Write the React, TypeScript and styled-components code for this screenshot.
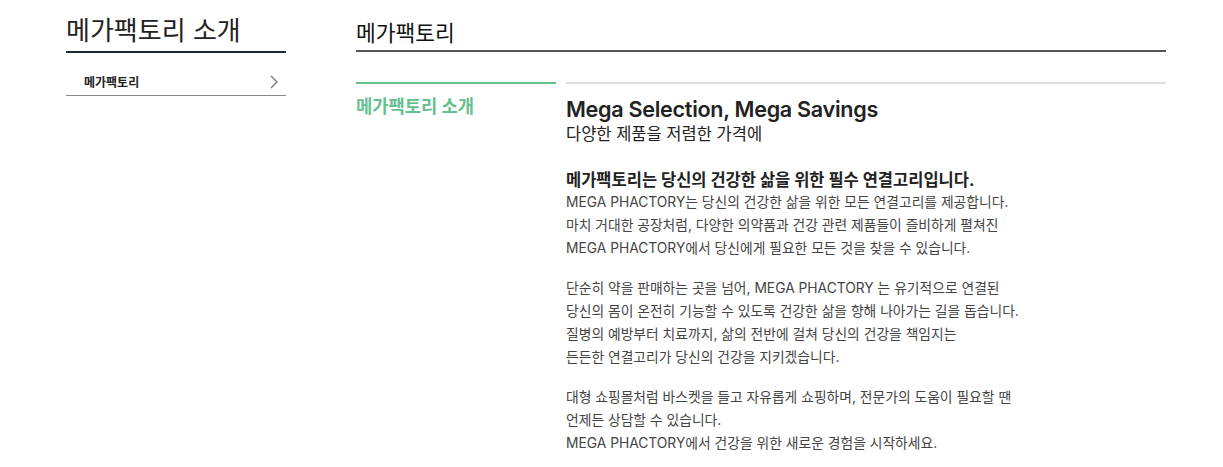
import React, { type FC } from 'react'
import styled, { createGlobalStyle } from 'styled-components'

const GlobalStyle = createGlobalStyle`
	html, body {
		margin: 0;
		padding: 0;
		background: #fff;
	}
	body {
		font-family: Inter, 'Noto Sans CJK KR', sans-serif;
		color: #222;
	}
	* {
		box-sizing: border-box;
	}
`

const Page = styled.div`
	display: flex;
	gap: 70px;
	padding-left: 66px;
	width: 1223px;
`

const Sidebar = styled.aside`
	width: 220px;
	flex-shrink: 0;
`

const SideTitle = styled.h2`
	margin: 0;
	padding: 12px 0 1px;
	font-size: 26px;
	font-weight: 400;
	line-height: 38px;
	color: #222;
	border-bottom: 2px solid #1e2836;
`

const SideMenu = styled.ul`
	list-style: none;
	margin: 0;
	padding: 0;
`

const SideItem = styled.li`
	display: flex;
	align-items: center;
	justify-content: space-between;
	height: 43px;
	padding: 15px 8px 0 18px;
	font-size: 12px;
	font-weight: 700;
	color: #222;
	border-bottom: 1px solid #888;
`

const Chevron: FC = () => (
	<svg width='8' height='14' viewBox='0 0 8 14' fill='none'>
		<path d='M1 1l6 6-6 6' stroke='#777' strokeWidth='1.4' />
	</svg>
)

const Main = styled.main`
	width: 810px;
	flex-shrink: 0;
`

const MainTitle = styled.h1`
	margin: 0;
	padding: 18px 0 2px;
	font-size: 21.5px;
	font-weight: 400;
	line-height: 30px;
	color: #111;
	border-bottom: 2px solid #555;
`

const Row = styled.section`
	display: flex;
	gap: 10px;
	margin-top: 30px;
`

const LabelCol = styled.div<{ $accent: string }>`
	width: 200px;
	flex-shrink: 0;
	border-top: 2px solid ${({ $accent }) => $accent};
	padding-top: 11px;
`

const Label = styled.h3`
	margin: 0;
	font-size: 17.7px;
	font-weight: 700;
	line-height: 24px;
	color: #66c08f;
`

const Content = styled.div`
	flex: 1;
	border-top: 2px solid #ddd;
	padding-top: 11px;
`

const Headline = styled.h2`
	margin: 0;
	font-size: 21.6px;
	font-weight: 600;
	line-height: 28px;
	color: #222;
	letter-spacing: -0.3px;
`

const Sub = styled.p`
	margin: 0;
	font-size: 16.5px;
	line-height: 22px;
	color: #222;
`

const Lead = styled.h4`
	margin: 24px 0 0;
	font-size: 16.5px;
	font-weight: 700;
	line-height: 22px;
	color: #222;
`

const Para = styled.p`
	margin: 0 0 17px;
	font-size: 13.8px;
	line-height: 23px;
	color: #444;
`

const paragraphs: string[][] = [
	[
		'MEGA PHACTORY는 당신의 건강한 삶을 위한 모든 연결고리를 제공합니다.',
		'마치 거대한 공장처럼, 다양한 의약품과 건강 관련 제품들이 즐비하게 펼쳐진',
		'MEGA PHACTORY에서 당신에게 필요한 모든 것을 찾을 수 있습니다.',
	],
	[
		'단순히 약을 판매하는 곳을 넘어, MEGA PHACTORY 는 유기적으로 연결된',
		'당신의 몸이 온전히 기능할 수 있도록 건강한 삶을 향해 나아가는 길을 돕습니다.',
		'질병의 예방부터 치료까지, 삶의 전반에 걸쳐 당신의 건강을 책임지는',
		'든든한 연결고리가 당신의 건강을 지키겠습니다.',
	],
	[
		'대형 쇼핑몰처럼 바스켓을 들고 자유롭게 쇼핑하며, 전문가의 도움이 필요할 땐',
		'언제든 상담할 수 있습니다.',
		'MEGA PHACTORY에서 건강을 위한 새로운 경험을 시작하세요.',
	],
]

const App: FC = () => (
	<>
		<GlobalStyle />
		<Page>
			<Sidebar>
				<SideTitle>메가팩토리 소개</SideTitle>
				<SideMenu>
					<SideItem>
						메가팩토리
						<Chevron />
					</SideItem>
				</SideMenu>
			</Sidebar>
			<Main>
				<MainTitle>메가팩토리</MainTitle>
				<Row>
					<LabelCol $accent='#66c08f'>
						<Label>메가팩토리 소개</Label>
					</LabelCol>
					<Content>
						<Headline>Mega Selection, Mega Savings</Headline>
						<Sub>다양한 제품을 저렴한 가격에</Sub>
						<Lead>메가팩토리는 당신의 건강한 삶을 위한 필수 연결고리입니다.</Lead>
						{paragraphs.map((lines, i) => (
							<Para key={i}>
								{lines.map((line, j) => (
									<React.Fragment key={j}>
										{line}
										{j < lines.length - 1 && <br />}
									</React.Fragment>
								))}
							</Para>
						))}
					</Content>
				</Row>
			</Main>
		</Page>
	</>
)

export default App
